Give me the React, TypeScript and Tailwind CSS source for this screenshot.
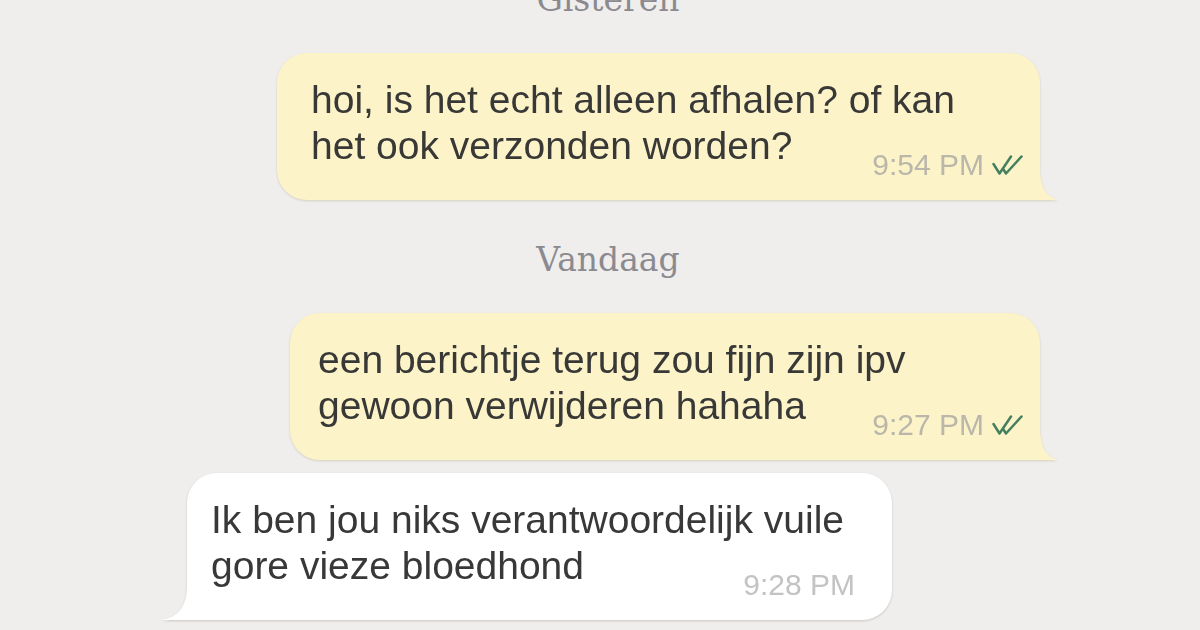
function Check() {
  return (
    <svg width="31" height="20" viewBox="0 0 31 20" fill="none" className="shrink-0">
      <path d="M1.5 9 L7.5 18.5 L19 1.5" stroke="#447f5f" strokeWidth="2.5" strokeLinecap="round" strokeLinejoin="round" />
      <path d="M11.5 14.5 L14 18.5 L29.5 1.5" stroke="#447f5f" strokeWidth="2.5" strokeLinecap="round" strokeLinejoin="round" />
    </svg>
  );
}

function DayLabel({ text, className }: { text: string; className: string }) {
  return (
    <div className={`h-[40px] text-center font-['DejaVu_Serif',serif] text-[33px] leading-[40px] text-[#8b8a90] ${className}`}>
      {text}
    </div>
  );
}

function OutBubble({ lines, time, width, padLeft }: { lines: [string, string]; time: string; width: string; padLeft: string }) {
  return (
    <div className={`relative self-end mr-[16px] drop-shadow-[0_1.5px_1px_rgba(120,100,40,0.22)] ${width}`}>
      <div className={`rounded-[30px] rounded-br-none bg-[#fcf3c9] pr-[17px] pt-[23.5px] pb-[20.5px] text-[39px] leading-[46px] text-[#383836] ${padLeft}`}>
        <div>{lines[0]}</div>
        <div className="flex items-start justify-between">
          <span>{lines[1]}</span>
          <div className="mt-[27px] flex h-[30px] items-center gap-[8px]">
            <span className="text-[30px] leading-[30px] text-[#bab7aa]">{time}</span>
            <Check />
          </div>
        </div>
      </div>
      <svg className="absolute bottom-0 -right-[18px]" width="18" height="30" viewBox="0 0 18 30">
        <path d="M0 0 C0.5 17 6 27 18 30 L0 30 Z" fill="#fcf3c9" />
      </svg>
    </div>
  );
}

function InBubble({ lines, time }: { lines: [string, string]; time: string }) {
  return (
    <div className="relative self-start ml-[27px] mt-[13px] w-[705px] drop-shadow-[0_1.5px_1px_rgba(0,0,0,0.16)]">
      <div className="rounded-[30px] rounded-bl-none bg-white pl-[24px] pr-[37px] pt-[23.5px] pb-[20.5px] text-[39px] leading-[46px] text-[#383838]">
        <div>{lines[0]}</div>
        <div className="flex items-start justify-between">
          <span>{lines[1]}</span>
          <span className="mt-[27px] h-[30px] text-[30px] leading-[30px] text-[#c3c3c3]">{time}</span>
        </div>
      </div>
      <svg className="absolute bottom-0 -left-[25px]" width="25" height="33" viewBox="0 0 25 33">
        <path d="M25 0 C24.5 19 17 30 0 33 L25 33 Z" fill="#ffffff" />
      </svg>
    </div>
  );
}

export default function App() {
  return (
    <div className="h-[630px] w-[1200px] overflow-hidden bg-[#efeeec] font-['Liberation_Sans',Arial,sans-serif]">
      <div className="ml-[160px] flex w-[896px] flex-col">
        <DayLabel text="Gisteren" className="-mt-[20px] mb-[33px]" />
        <OutBubble
          lines={["hoi, is het echt alleen afhalen? of kan", "het ook verzonden worden?"]}
          time="9:54 PM"
          width="w-[763px]"
          padLeft="pl-[34px]"
        />
        <DayLabel text="Vandaag" className="mt-[40px] mb-[33px]" />
        <OutBubble
          lines={["een berichtje terug zou fijn zijn ipv", "gewoon verwijderen hahaha"]}
          time="9:27 PM"
          width="w-[750px]"
          padLeft="pl-[28px]"
        />
        <InBubble lines={["Ik ben jou niks verantwoordelijk vuile", "gore vieze bloedhond"]} time="9:28 PM" />
      </div>
    </div>
  );
}
